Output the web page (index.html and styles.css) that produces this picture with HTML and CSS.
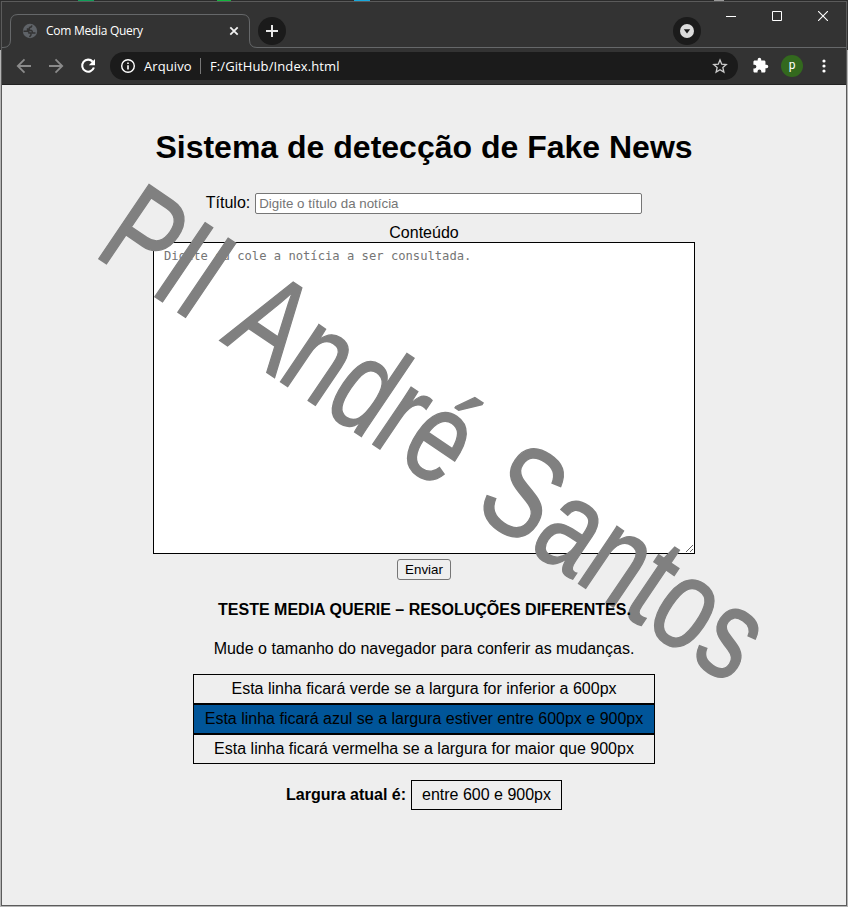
FILE: index.html
```html
<!DOCTYPE html>
<html lang="pt-BR">
<head>
<meta charset="utf-8">
<title>Com Media Query</title>
<link rel="stylesheet" href="styles.css">
</head>
<body>
<div class="backdrop"><i class="b1"></i><i class="b2"></i><i class="b3"></i><i class="b4"></i></div>
<div class="window">
  <header class="tabstrip">
    <svg class="tab-outline" width="844" height="46" viewBox="0 0 844 46"><path d="M0 45.5H1Q8.500 45.500 8.500 38V20Q8.500 12.500 16 12.500H240Q247.500 12.500 247.500 20V38Q247.500 45.500 255 45.500H844" fill="none" stroke="#66686a"/></svg>
    <div class="tab">
      <svg width="16" height="16" viewBox="0 0 16 16"><circle cx="8" cy="8" r="7.200" fill="#5f6368"/><path d="M1.500 8.300H5.500Q7 8.500 7 10H9V12L7.500 14M10 2.500Q9.500 4.500 7.500 4.500V6H5.500V7.500H9.500Q10.500 8 10.500 10H13.500" fill="none" stroke="#333" stroke-width="1.400"/></svg>
      <span class="tab-title">Com Media Query</span>
      <svg width="10" height="10" viewBox="0 0 10 10"><path d="M1.300 1.300l7.400 7.400M8.700 1.300L1.300 8.700" stroke="#f1f1f1" stroke-width="1.800"/></svg>
    </div>
    <div class="round newtab"><svg width="28" height="28" viewBox="0 0 28 28"><path d="M14 8v12M8 14h12" stroke="#e8e8e8" stroke-width="2"/></svg></div>
    <div class="round tabsearch"><svg width="28" height="28" viewBox="0 0 28 28"><circle cx="14" cy="14" r="7" fill="#dcdcdc"/><path d="M10.800 12.200h6.400L14 16.600z" fill="#1b1b1b"/></svg></div>
    <div class="controls">
      <svg width="10" height="10" viewBox="0 0 10 10"><path d="M0 5.500h10" stroke="#fff"/></svg>
      <svg width="10" height="10" viewBox="0 0 10 10"><path d="M.5.5h9v9h-9z" fill="none" stroke="#fff"/></svg>
      <svg width="10" height="10" viewBox="0 0 10 10"><path d="M0 0l10 10M10 0L0 10" stroke="#fff" stroke-width="1.100"/></svg>
    </div>
  </header>
  <nav class="toolbar">
    <svg class="nav-icon" width="16" height="16" viewBox="0 0 16 16"><path d="M15 8H2M8.500 1.300L1.800 8l6.700 6.700" fill="none" stroke="#8b8b8b" stroke-width="1.800"/></svg>
    <svg class="nav-icon" width="16" height="16" viewBox="0 0 16 16"><path d="M1 8h13M7.500 1.300L14.200 8l-6.700 6.700" fill="none" stroke="#8b8b8b" stroke-width="1.800"/></svg>
    <svg class="nav-icon" width="16" height="16" viewBox="0 0 16 16"><path d="M12.700 3.700A6 6 0 1 0 13.900 9.500" fill="none" stroke="#fff" stroke-width="2.100"/><path d="M15 1v6.200H8.800z" fill="#fff"/></svg>
    <div class="omnibox">
      <svg width="16" height="16" viewBox="0 0 16 16"><circle cx="8" cy="8" r="6.300" fill="none" stroke="#fff" stroke-width="1.400"/><path d="M8 7.200v4.200M8 4.500v1.600" stroke="#fff" stroke-width="1.600"/></svg>
      <span class="scheme">Arquivo</span><span class="sep"></span><span class="url">F:/GitHub/Index.html</span>
      <svg class="star" width="16" height="16" viewBox="0 0 24 24"><path d="M12 3l2.600 6.300 6.800.6-5.100 4.500 1.500 6.600L12 17.500 6.200 21l1.500-6.600-5.100-4.500 6.800-.6z" fill="none" stroke="#ccc" stroke-width="2"/></svg>
    </div>
    <svg class="puzzle" width="17" height="17" viewBox="0 0 24 24"><path fill="#fff" d="M20.500 11H19V7c0-1.100-.9-2-2-2h-4V3.500a2.500 2.500 0 0 0-5 0V5H4c-1.100 0-2 .9-2 2v3.800h1.500a2.700 2.700 0 0 1 0 5.400H2V20c0 1.100.9 2 2 2h3.800v-1.500a2.700 2.700 0 0 1 5.400 0V22H17c1.100 0 2-.9 2-2v-4h1.500a2.500 2.500 0 0 0 0-5z"/></svg>
    <span class="avatar">p</span>
    <svg width="4" height="14" viewBox="0 0 4 14"><circle cx="2" cy="2" r="1.600" fill="#fff"/><circle cx="2" cy="7" r="1.600" fill="#fff"/><circle cx="2" cy="12" r="1.600" fill="#fff"/></svg>
  </nav>
  <main class="page">
    <h1>Sistema de detecção de Fake News</h1>
    <div class="field"><label for="t">Título:</label><input id="t" type="text" placeholder="Digite o título da notícia"></div>
    <label class="content-label" for="c">Conteúdo</label>
    <textarea id="c" placeholder="Digite ou cole a notícia a ser consultada."></textarea>
    <button>Enviar</button>
    <p class="test">TESTE MEDIA QUERIE – RESOLUÇÕES DIFERENTES.</p>
    <p class="hint">Mude o tamanho do navegador para conferir as mudanças.</p>
    <div class="lines">
      <div>Esta linha ficará verde se a largura for inferior a 600px</div>
      <div class="blue">Esta linha ficará azul se a largura estiver entre 600px e 900px</div>
      <div>Esta linha ficará vermelha se a largura for maior que 900px</div>
    </div>
    <div class="current"><b>Largura atual é:</b><span>entre 600 e 900px</span></div>
  </main>
</div>
<div class="watermark">PII André Santos</div>
</body>
</html>
```

FILE: styles.css
```css
* { box-sizing: border-box; }
body {
  margin: 0;
  width: 848px;
  height: 907px;
  padding: 1px;
  overflow: hidden;
  position: relative;
  background: linear-gradient(#333 50px, #b5b5b5 50px);
  font: 16px "Liberation Sans", sans-serif;
  color: #000;
}
.backdrop { position: absolute; left: 0; top: 0; width: 848px; height: 1px; background: #2b2b2b; }
.backdrop i { position: absolute; top: 0; height: 1px; }
.b1 { left: 78px; width: 16px; background: #0f9d58; }
.b2 { left: 217px; width: 14px; background: #12b53c; }
.b3 { left: 354px; width: 16px; background: #18a8dc; }
.b4 { left: 714px; width: 10px; background: #999; }
.window {
  width: 846px;
  height: 905px;
  border: 1px solid #5b5b5b;
  display: flex;
  flex-direction: column;
  background: #eee;
}
.tabstrip { position: relative; height: 46px; flex: none; display: flex; background: #333; }
.tab-outline { position: absolute; left: 0; top: 0; }
.tab {
  width: 240px;
  height: 33px;
  margin: 12px 0 0 8px;
  padding: 0 11px 0 12px;
  display: flex;
  align-items: center;
  color: #fff;
}
.tab-title { flex: 1; margin-left: 8px; font: 12px "Open Sans", sans-serif; letter-spacing: -.28px; white-space: nowrap; }
.round { width: 28px; height: 28px; border-radius: 50%; background: #1b1b1b; margin-top: 15px; }
.newtab { margin-left: 8px; }
.tabsearch { margin-left: 387px; }
.controls { margin: 9px 0 0 25px; height: 10px; display: flex; gap: 36px; }
.toolbar {
  height: 37px;
  flex: none;
  display: flex;
  align-items: center;
  padding: 0 0 1px 14px;
  background: #333;
  border-bottom: 1px solid #222;
}
.nav-icon { margin-right: 16px; }
.omnibox {
  width: 628px;
  height: 28px;
  margin-left: -2px;
  padding: 0 10px;
  border-radius: 14px;
  background: #1b1b1b;
  color: #fff;
  display: flex;
  align-items: center;
  font: 13px "Open Sans", sans-serif;
  letter-spacing: .1px;
}
.scheme { margin-left: 8px; width: 56px; }
.sep { width: 1px; height: 16px; background: #777; margin-right: 9px; }
.star { margin-left: auto; }
.puzzle { margin: 0 12px 0 14px; }
.avatar {
  width: 22px;
  height: 22px;
  border-radius: 50%;
  background: #33691e;
  color: #fff;
  font: 12px/20px Roboto, sans-serif;
  text-align: center;
  margin-right: 19px;
}
.page { flex: 1; display: flex; flex-direction: column; align-items: center; padding-top: 44px; }
h1 { margin: 0; font-size: 32px; line-height: 37px; }
.field { display: flex; align-items: center; gap: 5px; margin-top: 27px; height: 21px; }
.field label { position: relative; top: -1px; }
input {
  width: 387px;
  height: 21px;
  padding: 1px 3px;
  border: 1px solid #767676;
  border-radius: 2px;
  background: #fff;
  font: 13.333px "Liberation Sans", sans-serif;
}
input::placeholder, textarea::placeholder { color: #757575; }
.content-label { margin-top: 10px; line-height: 18px; height: 18px; }
textarea {
  display: block;
  width: 542px;
  height: 312px;
  padding: 5px 10px;
  border: 1px solid #000;
  border-radius: 0;
  background: #fff;
  font: 12.170px/16px "DejaVu Sans Mono", monospace;
}
button {
  width: 54px;
  height: 21px;
  margin-top: 5px;
  padding: 0;
  border: 1px solid #767676;
  border-radius: 3px;
  background: #efefef;
  font: 13.333px "Liberation Sans", sans-serif;
}
p { margin: 0; line-height: 18px; }
.test { position: relative; z-index: 1; margin-top: 21px; padding-left: 1px; font-weight: bold; }
.hint { margin-top: 21px; }
.lines { width: 462px; margin-top: 16px; text-align: center; }
.lines div { height: 30px; border: 1px solid #000; line-height: 28px; white-space: nowrap; }
.lines .blue { background: #005599; }
.current { display: flex; align-items: center; gap: 5px; margin-top: 16px; }
.current span { height: 30px; line-height: 28px; padding: 0 10px; border: 1px solid #000; }
.watermark {
  position: absolute;
  left: 91.500px;
  top: 153.600px;
  font-size: 130px;
  line-height: 100px;
  height: 100px;
  white-space: nowrap;
  word-spacing: 12px;
  color: #808080;
  -webkit-text-stroke: 1.500px #808080;
  transform-origin: 0 95px;
  transform: translateY(5px) rotate(34.100deg) scaleX(.77);
  pointer-events: none;
}
```
